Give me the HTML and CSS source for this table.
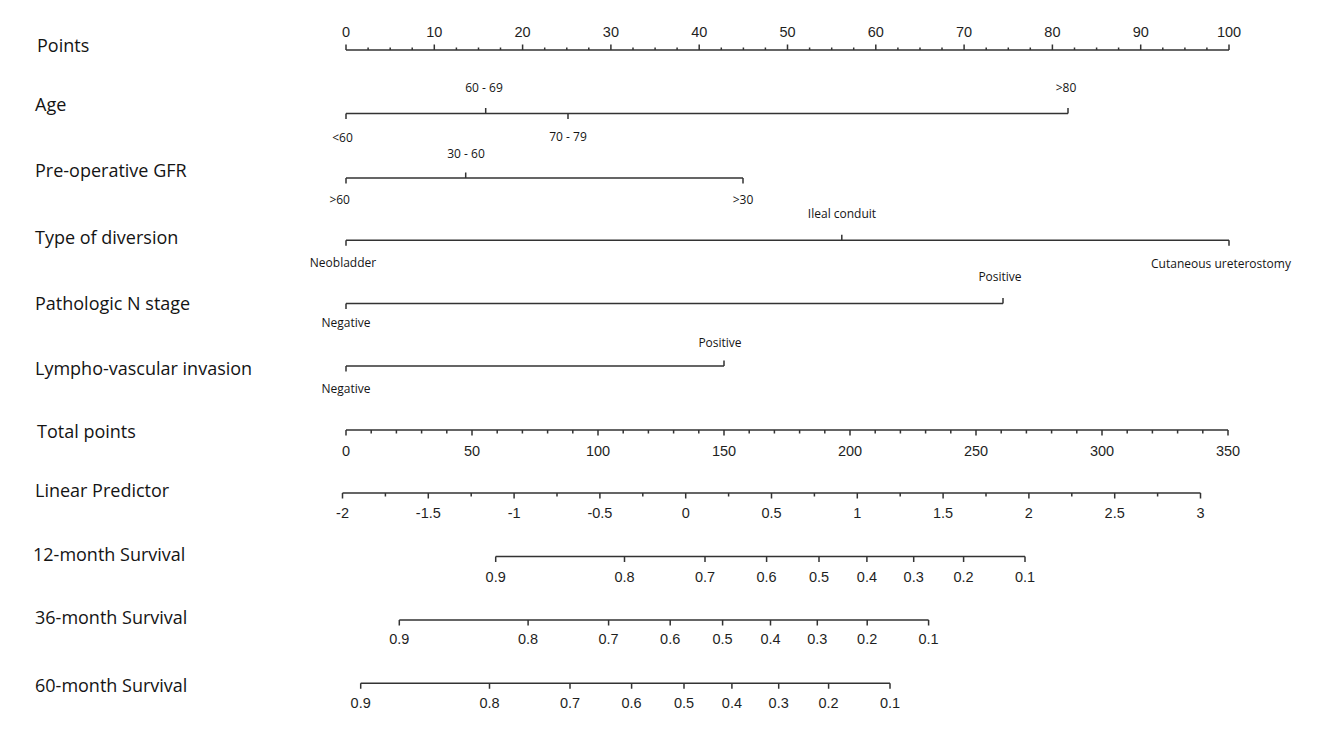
FILE: index.html
```html
<!DOCTYPE html>
<html lang="en">
<head>
<meta charset="utf-8">
<title>Nomogram</title>
<link rel="stylesheet" href="styles.css">
</head>
<body>
<div class="nomogram">

  <div class="row">
    <div class="row-label in2">Points</div>
    <svg class="plot" width="1018" height="59" viewBox="300 0 1018 59">
      <path class="axis" d="M346 35H1229M346 29.5V35M434.3 29.5V35M522.6 29.5V35M610.9 29.5V35M699.2 29.5V35M787.5 29.5V35M875.8 29.5V35M964.1 29.5V35M1052.4 29.5V35M1140.7 29.5V35M1229 29.5V35M368.1 32.5V35M390.2 32.5V35M412.2 32.5V35M456.4 32.5V35M478.5 32.5V35M500.5 32.5V35M544.7 32.5V35M566.8 32.5V35M588.8 32.5V35M633 32.5V35M655.1 32.5V35M677.1 32.5V35M721.3 32.5V35M743.4 32.5V35M765.4 32.5V35M809.6 32.5V35M831.7 32.5V35M853.7 32.5V35M897.9 32.5V35M920 32.5V35M942 32.5V35M986.2 32.5V35M1008.3 32.5V35M1030.3 32.5V35M1074.5 32.5V35M1096.6 32.5V35M1118.6 32.5V35M1162.8 32.5V35M1184.9 32.5V35M1206.9 32.5V35"/>
      <text class="num" x="346" y="22">0</text>
      <text class="num" x="434.3" y="22">10</text>
      <text class="num" x="522.6" y="22">20</text>
      <text class="num" x="610.9" y="22">30</text>
      <text class="num" x="699.2" y="22">40</text>
      <text class="num" x="787.5" y="22">50</text>
      <text class="num" x="875.8" y="22">60</text>
      <text class="num" x="964.1" y="22">70</text>
      <text class="num" x="1052.4" y="22">80</text>
      <text class="num" x="1140.7" y="22">90</text>
      <text class="num" x="1229" y="22">100</text>
    </svg>
  </div>

  <div class="row">
    <div class="row-label">Age</div>
    <svg class="plot" width="1018" height="66" viewBox="300 0 1018 66">
      <path class="axis" d="M346 39.5H1068M346 39.5V45M485.7 34V39.5M568 39.5V45M1068 34V39.5"/>
      <text class="lvl" x="484" y="18">60 - 69</text>
      <text class="lvl" x="1066" y="17.5">&gt;80</text>
      <text class="lvl" x="342.5" y="67.5">&lt;60</text>
      <text class="lvl" x="568" y="67">70 - 79</text>
    </svg>
  </div>

  <div class="row">
    <div class="row-label">Pre-operative GFR</div>
    <svg class="plot" width="1018" height="67" viewBox="300 0 1018 67">
      <path class="axis" d="M346 38H743M346 38V43.5M465.7 32.5V38M743 38V43.5"/>
      <text class="lvl" x="466" y="18.3">30 - 60</text>
      <text class="lvl" x="339.7" y="63.6">&gt;60</text>
      <text class="lvl" x="743" y="63.6">&gt;30</text>
    </svg>
  </div>

  <div class="row">
    <div class="row-label">Type of diversion</div>
    <svg class="plot" width="1018" height="66" viewBox="300 0 1018 66">
      <path class="axis" d="M346 33.3H1229M346 33.3V38.8M841.8 27.8V33.3M1229 33.3V38.8"/>
      <text class="lvl" x="842" y="11.3">Ileal conduit</text>
      <text class="lvl" x="343" y="60">Neobladder</text>
      <text class="lvl" x="1221" y="60.5">Cutaneous ureterostomy</text>
    </svg>
  </div>

  <div class="row">
    <div class="row-label">Pathologic N stage</div>
    <svg class="plot" width="1018" height="65" viewBox="300 0 1018 65">
      <path class="axis" d="M346 30.5H1003M346 30.5V36M1003 25V30.5"/>
      <text class="lvl" x="1000" y="7.5">Positive</text>
      <text class="lvl" x="346" y="54.3">Negative</text>
    </svg>
  </div>

  <div class="row">
    <div class="row-label">Lympho-vascular invasion</div>
    <svg class="plot" width="1018" height="63" viewBox="300 0 1018 63">
      <path class="axis" d="M346 28H724M346 28V33.5M724 22.5V28"/>
      <text class="lvl" x="720" y="9.3">Positive</text>
      <text class="lvl" x="346" y="54.7">Negative</text>
    </svg>
  </div>

  <div class="row">
    <div class="row-label in2">Total points</div>
    <svg class="plot" width="1018" height="59" viewBox="300 0 1018 59">
      <path class="axis" d="M346 29H1228M346 29V34.5M472 29V34.5M598 29V34.5M724 29V34.5M850 29V34.5M976 29V34.5M1102 29V34.5M1228 29V34.5M371.2 29V32.5M396.4 29V32.5M421.6 29V32.5M446.8 29V32.5M497.2 29V32.5M522.4 29V32.5M547.6 29V32.5M572.8 29V32.5M623.2 29V32.5M648.4 29V32.5M673.6 29V32.5M698.8 29V32.5M749.2 29V32.5M774.4 29V32.5M799.6 29V32.5M824.8 29V32.5M875.2 29V32.5M900.4 29V32.5M925.6 29V32.5M950.8 29V32.5M1001.2 29V32.5M1026.4 29V32.5M1051.6 29V32.5M1076.8 29V32.5M1127.2 29V32.5M1152.4 29V32.5M1177.6 29V32.5M1202.8 29V32.5"/>
      <text class="num" x="346" y="54.7">0</text>
      <text class="num" x="472" y="54.7">50</text>
      <text class="num" x="598" y="54.7">100</text>
      <text class="num" x="724" y="54.7">150</text>
      <text class="num" x="850" y="54.7">200</text>
      <text class="num" x="976" y="54.7">250</text>
      <text class="num" x="1102" y="54.7">300</text>
      <text class="num" x="1228" y="54.7">350</text>
    </svg>
  </div>

  <div class="row">
    <div class="row-label">Linear Predictor</div>
    <svg class="plot" width="1018" height="64" viewBox="300 0 1018 64">
      <path class="axis" d="M342.5 33H1200.5M342.5 33V38.5M428.3 33V38.5M514.1 33V38.5M599.9 33V38.5M685.7 33V38.5M771.5 33V38.5M857.3 33V38.5M943.1 33V38.5M1028.9 33V38.5M1114.7 33V38.5M1200.5 33V38.5M385.4 33V36.5M471.2 33V36.5M557 33V36.5M642.8 33V36.5M728.6 33V36.5M814.4 33V36.5M900.2 33V36.5M986 33V36.5M1071.8 33V36.5M1157.6 33V36.5"/>
      <text class="num" x="342.5" y="58.3">-2</text>
      <text class="num" x="428.3" y="58.3">-1.5</text>
      <text class="num" x="514.1" y="58.3">-1</text>
      <text class="num" x="599.9" y="58.3">-0.5</text>
      <text class="num" x="685.7" y="58.3">0</text>
      <text class="num" x="771.5" y="58.3">0.5</text>
      <text class="num" x="857.3" y="58.3">1</text>
      <text class="num" x="943.1" y="58.3">1.5</text>
      <text class="num" x="1028.9" y="58.3">2</text>
      <text class="num" x="1114.7" y="58.3">2.5</text>
      <text class="num" x="1200.5" y="58.3">3</text>
    </svg>
  </div>

  <div class="row">
    <div class="row-label in0">12-month Survival</div>
    <svg class="plot" width="1018" height="63" viewBox="300 0 1018 63">
      <path class="axis" d="M495.7 32.5H1025M495.7 32.5V38M624.5 32.5V38M705 32.5V38M766.6 32.5V38M819 32.5V38M866.9 32.5V38M913.7 32.5V38M963.6 32.5V38M1025 32.5V38"/>
      <text class="num" x="495.7" y="57.7">0.9</text>
      <text class="num" x="624.5" y="57.7">0.8</text>
      <text class="num" x="705" y="57.7">0.7</text>
      <text class="num" x="766.6" y="57.7">0.6</text>
      <text class="num" x="819" y="57.7">0.5</text>
      <text class="num" x="866.9" y="57.7">0.4</text>
      <text class="num" x="913.7" y="57.7">0.3</text>
      <text class="num" x="963.6" y="57.7">0.2</text>
      <text class="num" x="1025" y="57.7">0.1</text>
    </svg>
  </div>

  <div class="row">
    <div class="row-label">36-month Survival</div>
    <svg class="plot" width="1018" height="68" viewBox="300 0 1018 68">
      <path class="axis" d="M399.3 33H928.6M399.3 33V38.5M528.1 33V38.5M608.6 33V38.5M670.2 33V38.5M722.6 33V38.5M770.5 33V38.5M817.3 33V38.5M867.2 33V38.5M928.6 33V38.5"/>
      <text class="num" x="399.3" y="57.3">0.9</text>
      <text class="num" x="528.1" y="57.3">0.8</text>
      <text class="num" x="608.6" y="57.3">0.7</text>
      <text class="num" x="670.2" y="57.3">0.6</text>
      <text class="num" x="722.6" y="57.3">0.5</text>
      <text class="num" x="770.5" y="57.3">0.4</text>
      <text class="num" x="817.3" y="57.3">0.3</text>
      <text class="num" x="867.2" y="57.3">0.2</text>
      <text class="num" x="928.6" y="57.3">0.1</text>
    </svg>
  </div>

  <div class="row">
    <div class="row-label">60-month Survival</div>
    <svg class="plot" width="1018" height="74" viewBox="300 0 1018 74">
      <path class="axis" d="M360.7 28.3H890M360.7 28.3V33.8M489.5 28.3V33.8M570 28.3V33.8M631.6 28.3V33.8M684 28.3V33.8M731.9 28.3V33.8M778.7 28.3V33.8M828.6 28.3V33.8M890 28.3V33.8"/>
      <text class="num" x="360.7" y="53.3">0.9</text>
      <text class="num" x="489.5" y="53.3">0.8</text>
      <text class="num" x="570" y="53.3">0.7</text>
      <text class="num" x="631.6" y="53.3">0.6</text>
      <text class="num" x="684" y="53.3">0.5</text>
      <text class="num" x="731.9" y="53.3">0.4</text>
      <text class="num" x="778.7" y="53.3">0.3</text>
      <text class="num" x="828.6" y="53.3">0.2</text>
      <text class="num" x="890" y="53.3">0.1</text>
    </svg>
  </div>

</div>
</body>
</html>
```

FILE: styles.css
```css
html, body {
  margin: 0;
  padding: 0;
  background: #ffffff;
}

.nomogram {
  padding-top: 15px;
  width: 1318px;
}

.row {
  display: grid;
  grid-template-columns: 300px 1018px;
}

.row-label {
  padding: 20px 0 0 35px;
  font-family: "Open Sans", "Liberation Sans", sans-serif;
  font-size: 18px;
  line-height: 20px;
  color: #141414;
  white-space: nowrap;
}

.row-label.in2 {
  padding-left: 37px;
}

.row-label.in0 {
  padding-left: 33px;
}

.plot {
  display: block;
  overflow: visible;
}

.axis {
  fill: none;
  stroke: #333333;
  stroke-width: 1.5;
}

.num {
  font-family: "Liberation Sans", Arial, sans-serif;
  font-size: 14.5px;
  fill: #1f1f1f;
  text-anchor: middle;
}

.lvl {
  font-family: "Open Sans", "Liberation Sans", sans-serif;
  font-size: 12px;
  fill: #151515;
  text-anchor: middle;
}
```
